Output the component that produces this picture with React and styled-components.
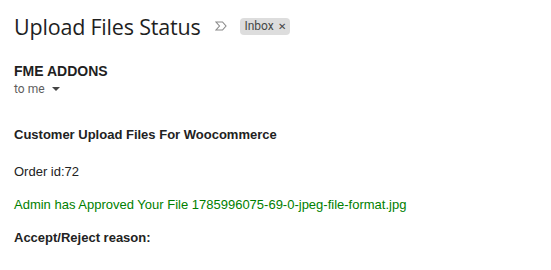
import styled, { createGlobalStyle } from 'styled-components';

const GlobalStyle = createGlobalStyle`
    body {
        margin: 0;
        background: #fff;
        font-family: Roboto, "Liberation Sans", Arial, sans-serif;
    }
`;

const Page = styled.div`
    width: 551px;
    height: 270px;
    padding: 12px 14px 0;
    box-sizing: border-box;
    overflow: hidden;
`;

const SubjectRow = styled.div`
    display: flex;
    align-items: center;
    height: 28px;
`;

const Subject = styled.h1`
    margin: 0;
    font-family: "Open Sans", Roboto, sans-serif;
    font-size: 21.5px;
    font-weight: 400;
    color: #1f1f1f;
    letter-spacing: -0.2px;
`;

const ImportanceIcon = styled.svg`
    margin-left: 15px;
    width: 12px;
    height: 10px;
`;

const Chip = styled.span`
    margin-left: 13px;
    display: inline-flex;
    align-items: center;
    gap: 4px;
    height: 17px;
    padding: 0 4px;
    border-radius: 4px;
    background: #dddddd;
    color: #444746;
    font-size: 12px;
`;

const ChipClose = styled.span`
    font-size: 10px;
    color: #444;
`;

const Sender = styled.div`
    margin-top: 23px;
    font-family: "Liberation Sans", Arial, sans-serif;
    font-size: 14px;
    font-weight: 700;
    color: #1f1f1f;
`;

const Recipient = styled.div`
    margin-top: 3px;
    display: flex;
    align-items: center;
    gap: 7px;
    font-size: 12px;
    color: #5e5e5e;
`;

const Caret = styled.span`
    width: 0;
    height: 0;
    border-left: 4px solid transparent;
    border-right: 4px solid transparent;
    border-top: 4px solid #444;
`;

const Body = styled.div`
    margin-top: 31px;
    font-family: "Liberation Sans", Arial, sans-serif;
    font-size: 13px;
    color: #222;
    display: flex;
    flex-direction: column;
    gap: 18px;
`;

const Line = styled.p`
    margin: 0;
    line-height: 15px;
    font-weight: ${(p) => (p.$bold ? 700 : 400)};
    color: ${(p) => (p.$green ? '#008000' : '#222')};
    ${(p) => p.$gap && `margin-top: ${p.$gap}px;`}
`;

function App() {
    return (
        <Page>
            <GlobalStyle />
            <SubjectRow>
                <Subject>Upload Files Status</Subject>
                <ImportanceIcon viewBox="0 0 12 10">
                    <path d="M1 1h6.5l3.5 4-3.5 4H1l3.5-4z" fill="none" stroke="#8a8a8a" strokeWidth="1.1" />
                </ImportanceIcon>
                <Chip>
                    Inbox <ChipClose>✕</ChipClose>
                </Chip>
            </SubjectRow>
            <Sender>FME ADDONS</Sender>
            <Recipient>
                to me <Caret />
            </Recipient>
            <Body>
                <Line $bold>Customer Upload Files For Woocommerce</Line>
                <Line $gap={4}>Order id:72</Line>
                <Line $green>Admin has Approved Your File 1785996075-69-0-jpeg-file-format.jpg</Line>
                <Line $bold>Accept/Reject reason:</Line>
            </Body>
        </Page>
    );
}
export default App;
